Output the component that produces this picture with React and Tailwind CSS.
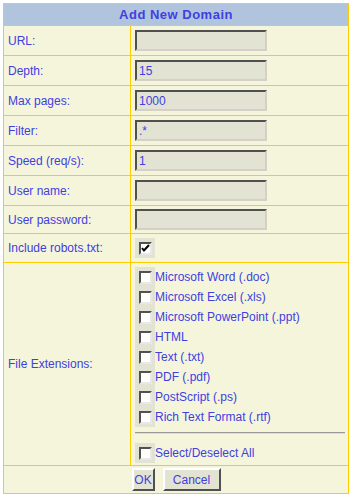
const font = { fontFamily: '"Liberation Sans", Arial, sans-serif' };

const fields = [
  { label: "URL:", value: "" },
  { label: "Depth:", value: "15" },
  { label: "Max pages:", value: "1000" },
  { label: "Filter:", value: ".*" },
  { label: "Speed (req/s):", value: "1" },
  { label: "User name:", value: "" },
  { label: "User password:", value: "", h: "h-[28px]" },
];

const extensions = [
  "Microsoft Word (.doc)",
  "Microsoft Excel (.xls)",
  "Microsoft PowerPoint (.ppt)",
  "HTML",
  "Text (.txt)",
  "PDF (.pdf)",
  "PostScript (.ps)",
  "Rich Text Format (.rtf)",
];

function Box({ checked }) {
  return (
    <span className="flex h-[13px] w-[13px] items-center justify-center border-2 border-t-[#505050] border-l-[#505050] border-b-[#e8e8e8] border-r-[#e8e8e8] bg-white">
      {checked && (
        <svg width="9" height="9" viewBox="0 0 9 9">
          <path d="M1 4 L3 6.5 L8 1" fill="none" stroke="#000" strokeWidth="2" />
        </svg>
      )}
    </span>
  );
}

function Row({ label, children, h = "h-[30px]" }) {
  return (
    <div className={`flex ${h} border-b border-[#ffcc00]`}>
      <div className="flex w-[127px] shrink-0 items-center border-r border-[#ffcc00] pl-[4px]">{label}</div>
      <div className="flex flex-1 items-center pl-[4px]">{children}</div>
    </div>
  );
}

export default function App() {
  return (
    <div className="min-h-[503px] bg-white pl-[3px] pt-[3px] text-[12px] text-[#4040e0]" style={font}>
      <div className="w-[346px] border border-[#ffcc00] bg-[#f5f5dc]">
        <div className="flex h-[22px] items-center justify-center border-b border-[#ffcc00] bg-[#b0c4de] text-[13px] font-bold tracking-[0.5px]">
          Add New Domain
        </div>
        {fields.map((f) => (
          <Row key={f.label} label={f.label} h={f.h}>
            <div className="flex h-[21px] w-[132px] items-center border-2 border-t-[#505050] border-l-[#505050] border-b-[#d4d0c8] border-r-[#d4d0c8] bg-[#e3e3d3] pl-[2px]">
              {f.value}
            </div>
          </Row>
        ))}
        <Row label="Include robots.txt:" h="h-[29px]">
          <div className="flex h-[20px] w-[20px] items-center justify-center bg-[#e3e3d3]">
            <Box checked />
          </div>
        </Row>
        <Row label="File Extensions:" h="h-[203px]">
          <div className="flex h-full w-full flex-col pr-[3px] pt-[4px]">
            <div className="flex flex-col">
              {extensions.map((e) => (
                <div key={e} className="flex h-[20px] items-center">
                  <div className="flex h-full w-[20px] items-center justify-center bg-[#e3e3d3]">
                    <Box />
                  </div>
                  <span>{e}</span>
                </div>
              ))}
            </div>
            <div className="mt-[5px] h-[2px] w-full border-t border-b border-t-[#999999] border-b-[#dcdcdc]" />
            <div className="mt-[9px] flex h-[20px] items-center">
              <div className="flex h-full w-[20px] items-center justify-center bg-[#e3e3d3]">
                <Box />
              </div>
              <span>Select/Deselect All</span>
            </div>
          </div>
        </Row>
        <div className="flex h-[27px] items-center justify-center gap-[8px]">
          <button className="flex h-[23px] w-[23px] items-center justify-center border-2 border-t-white border-l-white border-b-[#505050] border-r-[#505050] bg-[#e3e3d3] text-[12px] text-[#4040e0]">
            OK
          </button>
          <button className="flex h-[23px] w-[58px] items-center justify-center border-2 border-t-white border-l-white border-b-[#505050] border-r-[#505050] bg-[#e3e3d3] text-[12px] text-[#4040e0]">
            Cancel
          </button>
        </div>
      </div>
    </div>
  );
}
